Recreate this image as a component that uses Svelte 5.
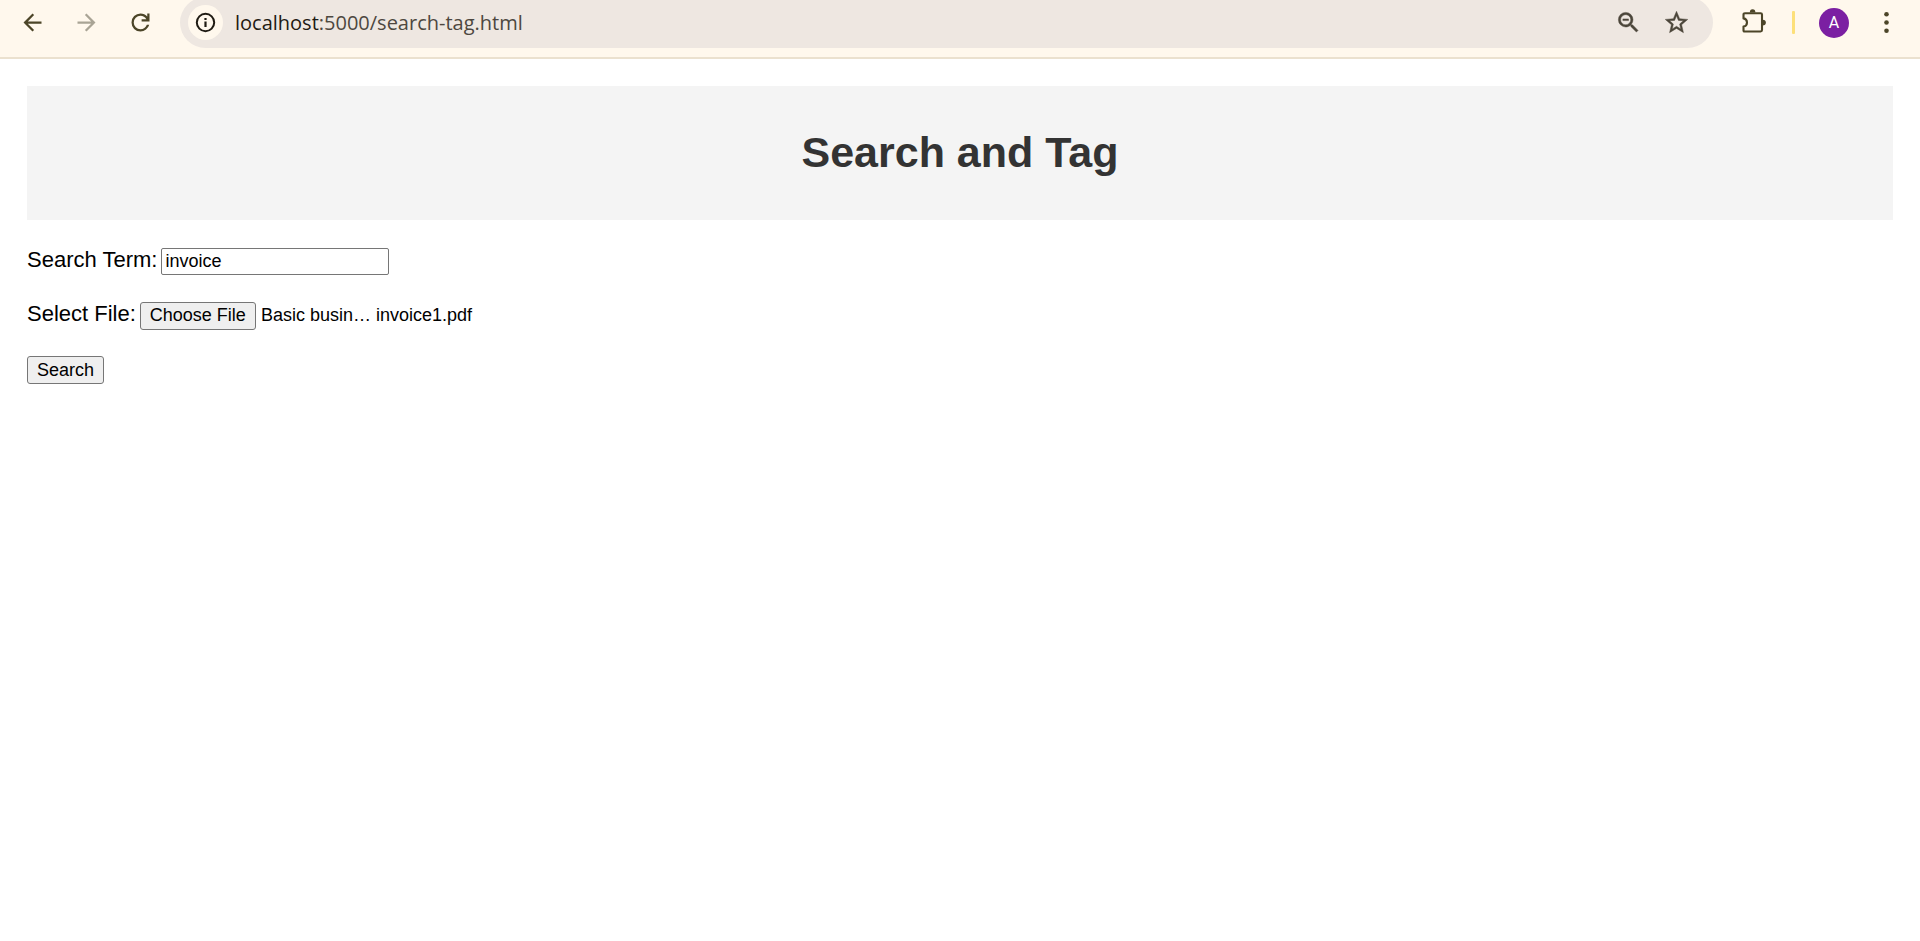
<script>
  import { onMount } from 'svelte';

  let address = $state('localhost:5000/search-tag.html');
  let term = $state('invoice');
  let fileInput;

  const host = $derived(address.split(':')[0]);
  const rest = $derived(address.slice(host.length));

  onMount(() => {
    const transfer = new DataTransfer();
    transfer.items.add(new File([''], 'Basic busin… invoice1.pdf', { type: 'application/pdf' }));
    fileInput.files = transfer.files;
  });
</script>

<div class="toolbar">
  <nav class="nav">
    <button class="icon" aria-label="Back">
      <svg viewBox="0 0 24 24"><path d="M20 11H7.83l5.59-5.59L12 4l-8 8 8 8 1.41-1.41L7.83 13H20z" /></svg>
    </button>
    <button class="icon muted" aria-label="Forward">
      <svg viewBox="0 0 24 24"><path d="M4 11h12.17l-5.59-5.59L12 4l8 8-8 8-1.41-1.41L16.17 13H4z" /></svg>
    </button>
    <button class="icon" aria-label="Reload">
      <svg viewBox="0 0 24 24"><path d="M12 20q-3.35 0-5.675-2.325T4 12t2.325-5.675T12 4q1.725 0 3.3.713T18 6.75V4h2v7h-7V9h4.2q-.8-1.4-2.188-2.2T12 6Q9.5 6 7.75 7.75T6 12t1.75 4.25T12 18q1.925 0 3.475-1.1T17.65 14h2.1q-.7 2.65-2.85 4.325T12 20" /></svg>
    </button>
  </nav>

  <div class="omnibox">
    <button class="info" aria-label="Site information">
      <svg viewBox="0 0 21 21">
        <circle cx="10.5" cy="10.5" r="8.7" fill="none" stroke="currentColor" stroke-width="2" />
        <path d="M9.4 9.4h2.2v5.6H9.4zM9.4 6h2.2v2H9.4z" />
      </svg>
    </button>
    <a class="url" href="#top"><span class="host">{host}</span>{rest}</a>
    <button class="icon page-action" aria-label="Zoom">
      <svg viewBox="0 0 24 24"><path d="M15.5 14h-.79l-.28-.27A6.47 6.47 0 0 0 16 9.5 6.5 6.5 0 1 0 9.5 16c1.61 0 3.09-.59 4.23-1.57l.27.28v.79l5 4.99L20.49 19zm-6 0C7.01 14 5 11.99 5 9.5S7.01 5 9.5 5 14 7.01 14 9.5 11.99 14 9.5 14zM7 8.8h5v1.5H7z" /></svg>
    </button>
    <button class="icon page-action" aria-label="Bookmark this tab">
      <svg viewBox="0 0 24 24"><path d="M22 9.24l-7.19-.62L12 2 9.19 8.63 2 9.24l5.46 4.73L5.82 21 12 17.27 18.18 21l-1.63-7.03zM12 15.4l-3.76 2.27 1-4.28-3.32-2.88 4.38-.38L12 6.1l1.71 4.04 4.38.38-3.32 2.88 1 4.28z" /></svg>
    </button>
  </div>

  <div class="tools">
    <button class="icon" aria-label="Extensions">
      <svg viewBox="0 0 27 27">
        <path d="M4 4.2H19.6Q21 4.2 21 5.6V21.1Q21 22.5 19.6 22.5H3.5Q2.5 22.5 2.5 21.4V17.6C4.8 17.2 6 15.6 6 13.5C6 11.4 4.8 9.8 2.5 9.4V5.6Q2.5 4.2 4 4.2Z" fill="none" stroke="currentColor" stroke-width="2.1" stroke-linejoin="round" />
        <path d="M8.8 3.6a2.8 3.4 0 0 1 5.6 0zM21.6 10.7a3.3 2.9 0 0 1 0 5.8z" />
      </svg>
    </button>
    <span class="divider"></span>
    <button class="avatar" aria-label="Profile">A</button>
    <button class="icon" aria-label="Menu">
      <svg viewBox="0 0 27 27"><circle cx="13.5" cy="5.2" r="2.3" /><circle cx="13.5" cy="13.5" r="2.3" /><circle cx="13.5" cy="21.8" r="2.3" /></svg>
    </button>
  </div>
</div>

<main id="top">
  <header>
    <h1>Search and Tag</h1>
  </header>
  <form onsubmit={(e) => e.preventDefault()}>
    <div class="row">
      <label for="term">Search Term:</label>
      <input id="term" type="text" bind:value={term} />
    </div>
    <div class="row">
      <label for="file">Select File:</label>
      <input id="file" type="file" bind:this={fileInput} />
    </div>
    <div class="row">
      <button class="submit" type="submit">Search</button>
    </div>
  </form>
</main>

<style>
  :global(body) {
    margin: 0;
    background: #fff;
    font-family: "Liberation Sans", Arial, sans-serif;
  }

  .toolbar {
    display: flex;
    align-items: center;
    margin-top: -3px;
    padding-bottom: 9px;
    background: #fff8ed;
    border-bottom: 2px solid #ebe1cf;
    color: #4c4528;
  }

  .nav {
    display: flex;
    gap: 27px;
    padding: 0 26px 0 19px;
  }

  .toolbar button {
    flex: none;
    border: 0;
    padding: 0;
    background: none;
    color: inherit;
  }

  .toolbar .icon {
    width: 27px;
    height: 27px;
  }

  .toolbar svg {
    display: block;
    width: 100%;
    height: 100%;
    fill: currentColor;
  }

  .toolbar .muted {
    color: #a9a495;
  }

  .omnibox {
    flex: 1;
    min-width: 0;
    height: 51px;
    box-sizing: border-box;
    display: flex;
    align-items: center;
    padding: 0 23px 0 8px;
    border-radius: 26px;
    background: #eee7e1;
  }

  .toolbar .info {
    width: 35px;
    height: 35px;
    padding: 7px;
    border-radius: 50%;
    background: #fff8ed;
    color: #1f1b13;
  }

  .url {
    flex: 1;
    margin-left: 12px;
    font-family: "Open Sans", "Noto Sans", sans-serif;
    font-size: 20px;
    line-height: 28px;
    color: #4d4740;
    text-decoration: none;
    white-space: nowrap;
    overflow: hidden;
  }

  .host {
    color: #1f1b13;
  }

  .toolbar .page-action {
    margin-left: 21px;
    color: #4b463a;
  }

  .page-action path {
    stroke: currentColor;
    stroke-width: 0.4px;
  }

  .tools {
    display: flex;
    align-items: center;
    gap: 24px;
    padding: 0 20px 0 28px;
  }

  .divider {
    width: 3px;
    height: 23px;
    border-radius: 1px;
    background: #fde07a;
  }

  .toolbar .avatar {
    width: 30px;
    height: 30px;
    border-radius: 50%;
    background: #7b1fa2;
    color: #fff;
    font-family: Roboto, sans-serif;
    font-size: 16px;
    line-height: 30px;
  }

  main {
    padding: 27px;
  }

  header {
    padding: 41px 27px 43px;
    background: #f4f4f4;
    text-align: center;
  }

  h1 {
    margin: 0;
    font-size: 43px;
    line-height: 50px;
    color: #333;
  }

  form {
    display: grid;
    gap: 26px;
    padding-top: 28px;
  }

  .row {
    display: flex;
    align-items: baseline;
    gap: 4px;
    height: 28px;
  }

  label {
    font-size: 22px;
    line-height: 22px;
    color: #000;
  }

  input,
  .submit {
    font-family: inherit;
    font-size: 18px;
    line-height: 21px;
    color: #000;
  }

  input[type="text"] {
    box-sizing: border-box;
    width: 228px;
    height: 27px;
    padding: 2px 3px;
    border: 1px solid #767676;
    border-radius: 2px;
  }

  input[type="file"] {
    width: 360px;
  }

  .submit,
  input[type="file"]::file-selector-button {
    box-sizing: border-box;
    height: 28px;
    margin: 0;
    padding: 1px 9px;
    border: 1px solid #767676;
    border-radius: 3px;
    background: #efefef;
    color: #000;
    font-family: inherit;
    font-size: 18px;
  }

  input[type="file"]::file-selector-button {
    margin-right: 5px;
    padding: 0 9px 2px;
  }
</style>
